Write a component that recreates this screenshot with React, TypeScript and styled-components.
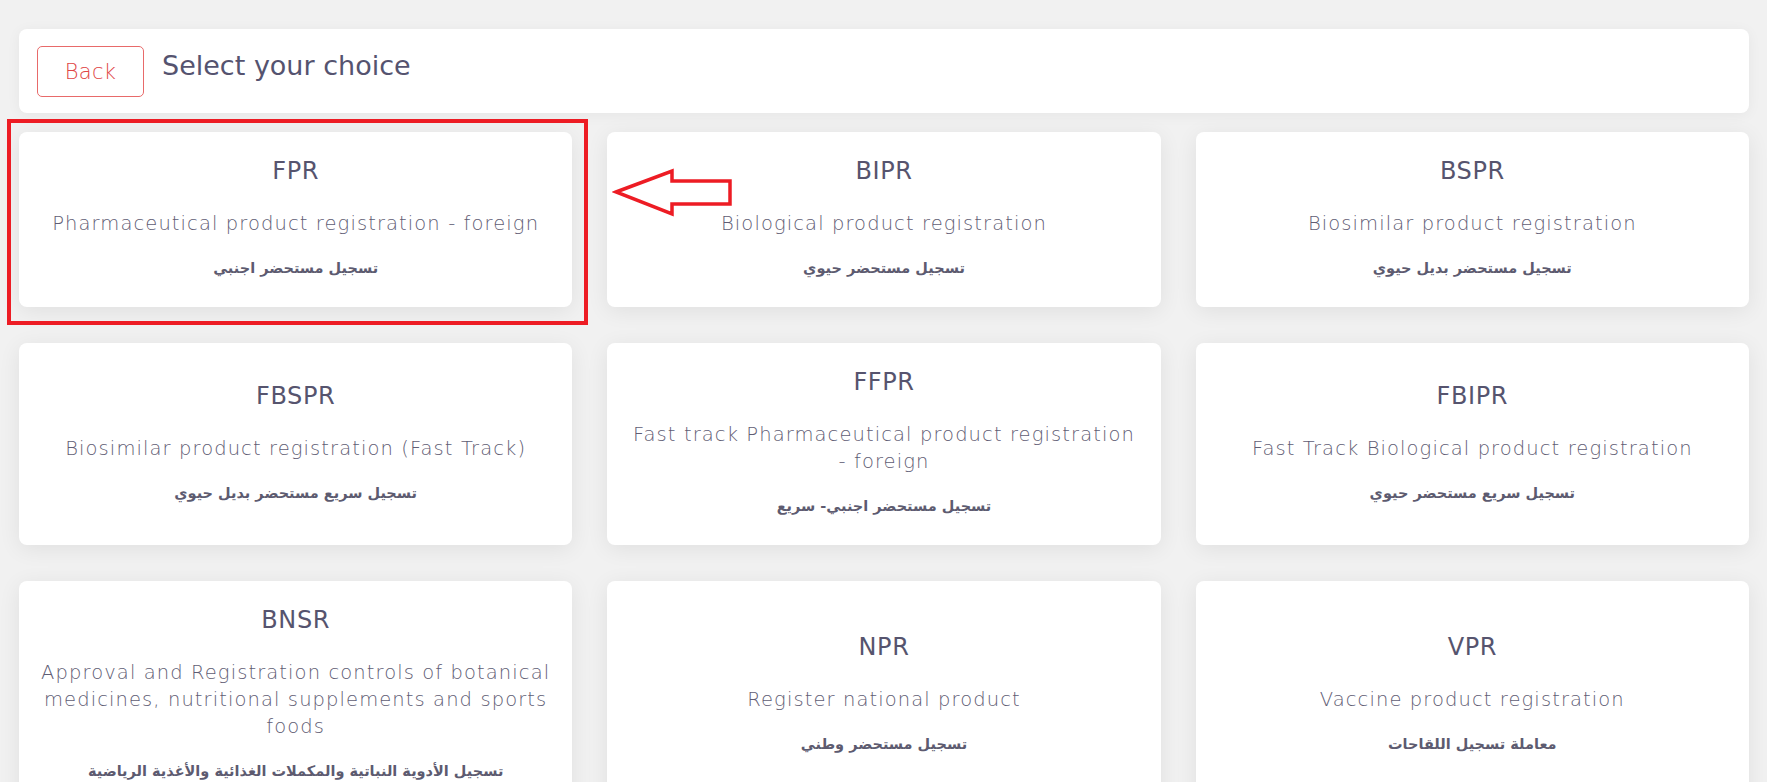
import styled, { createGlobalStyle } from "styled-components";

const GlobalStyle = createGlobalStyle`
  html, body {
    margin: 0;
    padding: 0;
    background: #f1f1f1;
  }
  * {
    box-sizing: border-box;
  }
`;

type Choice = {
  code: string;
  title: string;
  arabic: string;
};

const choices: Choice[] = [
  {
    code: "FPR",
    title: "Pharmaceutical product registration - foreign",
    arabic: "تسجيل مستحضر اجنبي",
  },
  {
    code: "BIPR",
    title: "Biological product registration",
    arabic: "تسجيل مستحضر حيوي",
  },
  {
    code: "BSPR",
    title: "Biosimilar product registration",
    arabic: "تسجيل مستحضر بديل حيوي",
  },
  {
    code: "FBSPR",
    title: "Biosimilar product registration (Fast Track)",
    arabic: "تسجيل سريع مستحضر بديل حيوي",
  },
  {
    code: "FFPR",
    title: "Fast track Pharmaceutical product registration - foreign",
    arabic: "تسجيل مستحضر اجنبي- سريع",
  },
  {
    code: "FBIPR",
    title: "Fast Track Biological product registration",
    arabic: "تسجيل سريع مستحضر حيوي",
  },
  {
    code: "BNSR",
    title:
      "Approval and Registration controls of botanical medicines, nutritional supplements and sports foods",
    arabic: "تسجيل الأدوية النباتية والمكملات الغذائية والأغذية الرياضية",
  },
  {
    code: "NPR",
    title: "Register national product",
    arabic: "تسجيل مستحضر وطني",
  },
  {
    code: "VPR",
    title: "Vaccine product registration",
    arabic: "معاملة تسجيل اللقاحات",
  },
];

const App = () => {
  return (
    <>
      <GlobalStyle />
      <Page>
        <Header>
          <BackButton>Back</BackButton>
          <HeaderTitle>Select your choice</HeaderTitle>
        </Header>
        <ChoiceGrid>
          {choices.map((item) => (
            <ChoiceCard key={item.code}>
              <Code>{item.code}</Code>
              <Title>{item.title}</Title>
              <Arabic dir="rtl">{item.arabic}</Arabic>
            </ChoiceCard>
          ))}
        </ChoiceGrid>
        {/* annotation drawn over the screenshot */}
        <Highlight />
        <Arrow width="124" height="52" viewBox="0 0 124 52">
          <polygon
            points="4,26 60,5 60,15 118,15 118,38 60,38 60,48"
            fill="none"
            stroke="#ed1c24"
            strokeWidth="3.5"
          />
        </Arrow>
      </Page>
    </>
  );
};

const Page = styled.div`
  position: relative;
  padding: 29px 18px 40px 19px;
  font-family: "DejaVu Sans", "Open Sans", sans-serif;
`;

const Header = styled.div`
  height: 84px;
  background: #ffffff;
  border-radius: 8px;
  box-shadow: 0 2px 14px rgba(0, 0, 0, 0.05);
  padding: 17px 18px;
  display: flex;
  align-items: flex-start;
  gap: 18px;
`;

const BackButton = styled.button`
  width: 107px;
  height: 51px;
  background: #ffffff;
  border: 1px solid #e86a6a;
  border-radius: 5px;
  color: #e04444;
  font-family: "DejaVu Sans", "Open Sans", sans-serif;
  font-weight: 200;
  font-size: 21px;
  letter-spacing: 0.3px;
  padding: 0;
`;

const HeaderTitle = styled.div`
  margin-top: 2px;
  line-height: 36px;
  font-size: 27px;
  color: #55536f;
`;

const ChoiceGrid = styled.div`
  margin-top: 19px;
  display: grid;
  grid-template-columns: repeat(3, 1fr);
  column-gap: 35px;
  row-gap: 36px;
`;

const ChoiceCard = styled.div`
  background: #ffffff;
  border-radius: 8px;
  box-shadow: 0 4px 22px rgba(0, 0, 0, 0.075);
  padding: 24px 21px 26px;
  display: flex;
  flex-direction: column;
  justify-content: center;
  align-items: center;
  text-align: center;
`;

const Code = styled.div`
  font-size: 24px;
  line-height: 30px;
  letter-spacing: 0.6px;
  color: #56546e;
  margin-bottom: 24px;
`;

const Title = styled.div`
  font-size: 19.5px;
  font-weight: 200;
  letter-spacing: 1.1px;
  line-height: 27px;
  color: #5f5d74;
  margin-bottom: 19px;
`;

const Arabic = styled.div`
  font-family: "DejaVu Sans", sans-serif;
  font-size: 14.5px;
  font-weight: bold;
  line-height: 25px;
  color: #5d5b70;
`;

const Highlight = styled.div`
  position: absolute;
  left: 7px;
  top: 119px;
  width: 581px;
  height: 206px;
  border: 4px solid #ed1c24;
  pointer-events: none;
`;

const Arrow = styled.svg`
  position: absolute;
  left: 612px;
  top: 166px;
  pointer-events: none;
`;

export default App;
